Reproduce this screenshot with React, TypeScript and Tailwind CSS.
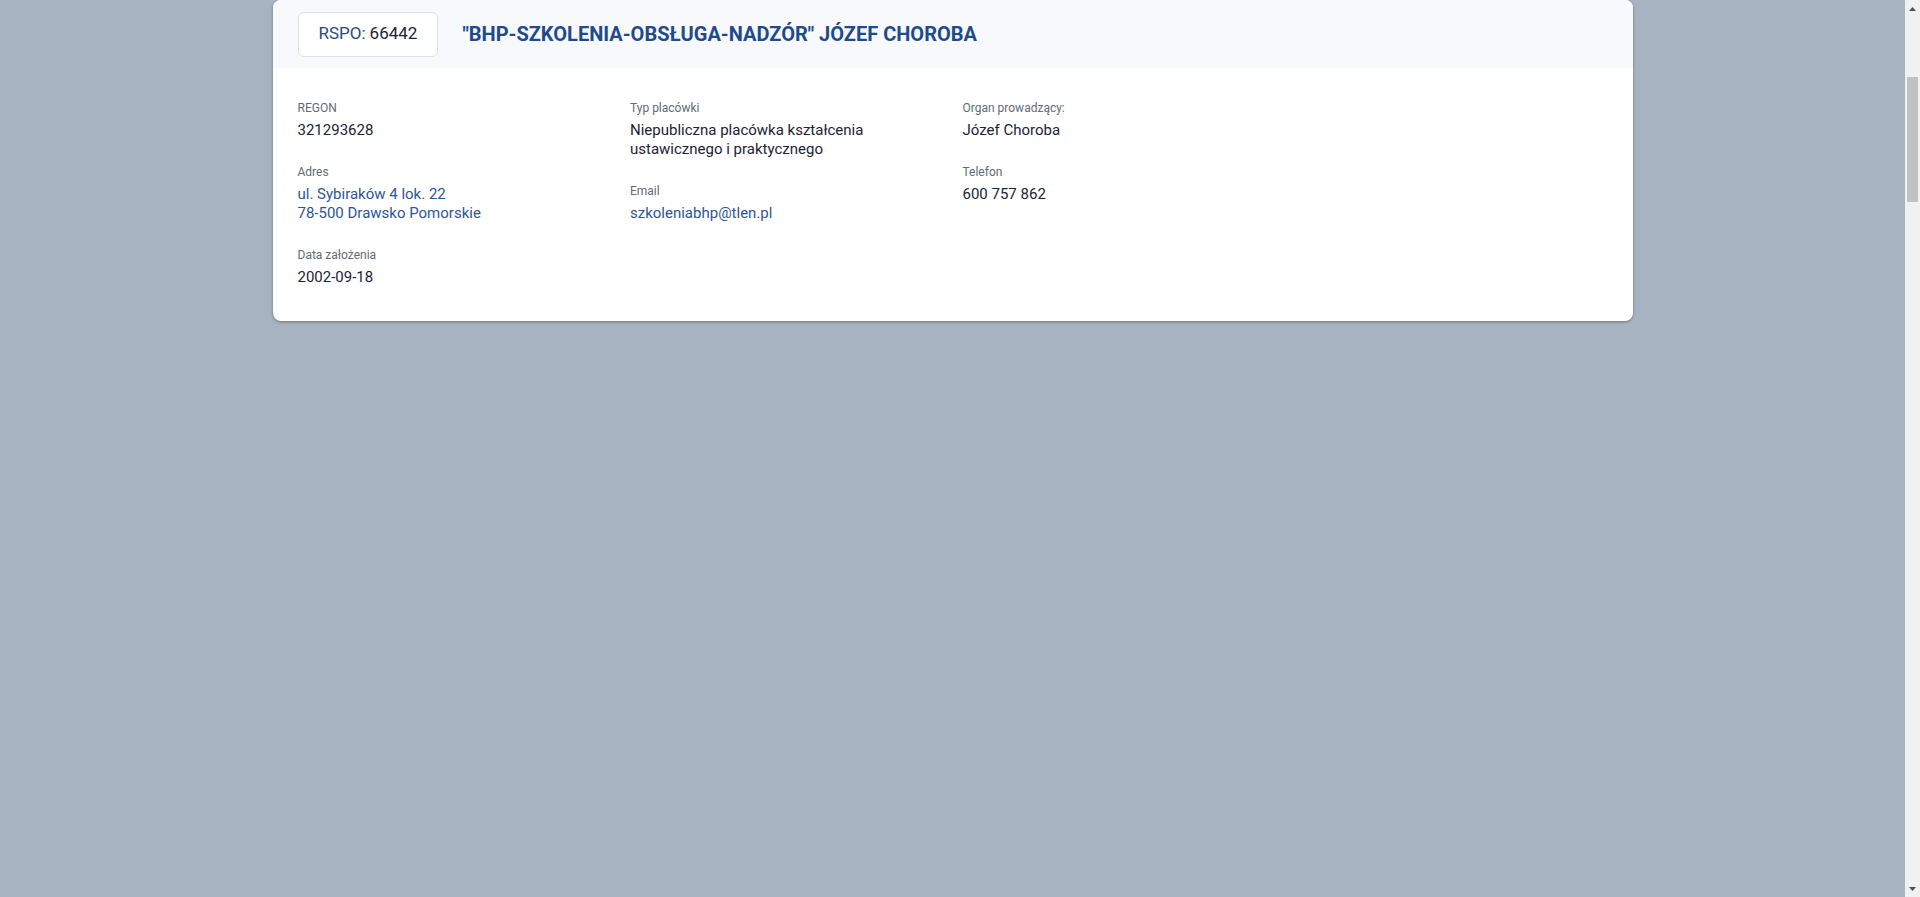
type Field = {
  label: string;
  lines: string[];
  link?: boolean;
};

const COLUMNS: Field[][] = [
  [
    { label: 'REGON', lines: ['321293628'] },
    { label: 'Adres', lines: ['ul. Sybiraków 4 lok. 22', '78-500 Drawsko Pomorskie'], link: true },
    { label: 'Data założenia', lines: ['2002-09-18'] }
  ],
  [
    { label: 'Typ placówki', lines: ['Niepubliczna placówka kształcenia ustawicznego i praktycznego'] },
    { label: 'Email', lines: ['szkoleniabhp@tlen.pl'], link: true }
  ],
  [
    { label: 'Organ prowadzący:', lines: ['Józef Choroba'] },
    { label: 'Telefon', lines: ['600 757 862'] }
  ],
  []
];

function Scrollbar(): JSX.Element {
  return (
    <div className="flex w-[15px] shrink-0 flex-col bg-[#f1f1f1]">
      <div className="flex h-[17px] items-center justify-center">
        <svg width="7" height="4" viewBox="0 0 7 4">
          <polygon points="3.5,0 7,4 0,4" fill="#505050" />
        </svg>
      </div>
      <div className="mx-[2px] mt-[60px] h-[125px] bg-[#c1c1c1]" />
      <div className="flex-1" />
      <div className="flex h-[17px] items-center justify-center">
        <svg width="7" height="4" viewBox="0 0 7 4">
          <polygon points="0,0 7,0 3.5,4" fill="#505050" />
        </svg>
      </div>
    </div>
  );
}

export default function App(): JSX.Element {
  return (
    <div className="flex h-screen w-full overflow-hidden bg-[#a8b3c1] font-['Roboto',sans-serif]">
      <main className="flex-1">
        <div className="mx-auto max-w-[1360px] rounded-lg bg-white shadow-[0_1px_3px_rgba(0,0,0,0.35)]">
          {/* Header band */}
          <div className="flex h-[68px] items-center gap-6 rounded-t-lg bg-[#f7f9fc] px-[25px]">
            <div className="flex h-[45px] items-center rounded-md border border-[#dde1e7] bg-white px-5 text-[17px]">
              <span className="text-[#2b4a7e]">RSPO:</span>
              <span className="ml-1 text-[#1c2333]">66442</span>
            </div>
            <h1 className="text-[20px] font-bold text-[#1f4a8c]">
              "BHP-SZKOLENIA-OBSŁUGA-NADZÓR" JÓZEF CHOROBA
            </h1>
          </div>

          {/* Details */}
          <div className="grid grid-cols-4 gap-x-5 px-[25px] pb-[34px] pt-8">
            {COLUMNS.map((col, i) => (
              <div key={i} className="flex flex-col gap-6">
                {col.map((f) => (
                  <div key={f.label}>
                    <p className="text-xs leading-4 text-[#666a70]">{f.label}</p>
                    <div
                      className={`mt-[5px] text-[15px] leading-[19px] ${
                        f.link ? 'text-[#2d5597]' : 'text-[#1c2333]'
                      }`}>
                      {f.lines.map((l) => (
                        <p key={l}>{l}</p>
                      ))}
                    </div>
                  </div>
                ))}
              </div>
            ))}
          </div>
        </div>
      </main>
      <Scrollbar />
    </div>
  );
}
